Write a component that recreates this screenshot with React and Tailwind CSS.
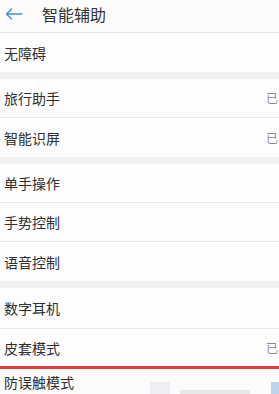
import React from "react";

const font = { fontFamily: '"Noto Sans CJK SC", "Noto Sans", sans-serif' };

function Row({ label, status, h = "h-[39px]", border = false }) {
  return (
    <div
      className={`relative flex items-center ${h} pl-[4px] bg-[#fdfdfd] ${
        border ? "border-b border-[#e9e9e9]" : ""
      }`}
    >
      <span className="text-[14px] leading-none text-[#2f2f2f]">{label}</span>
      {status && (
        <span className="absolute left-[266px] text-[12px] leading-none text-[#8a8a8a] whitespace-nowrap">
          已
        </span>
      )}
    </div>
  );
}

function Gap() {
  return <div className="h-[7px] bg-[#f1f1f1]" />;
}

export default function App() {
  return (
    <div
      className="w-[279px] h-[394px] overflow-hidden bg-[#fdfdfd] flex flex-col"
      style={font}
    >
      <div className="h-[33px] shrink-0 flex items-center border-b border-[#e6e6e6] bg-[#fcfcfc]">
        <svg
          width="18"
          height="12"
          viewBox="0 0 18 12"
          className="ml-[5px] mt-[-4px]"
          fill="none"
          stroke="#4a90d6"
          strokeWidth="1.4"
          strokeLinecap="round"
          strokeLinejoin="round"
        >
          <path d="M17 6H1.5M6.5 1L1.5 6l5 5" />
        </svg>
        <span className="ml-[19px] mt-[-4px] text-[16px] leading-none text-[#333]">
          智能辅助
        </span>
      </div>
      <Row label="无障碍" />
      <Gap />
      <Row label="旅行助手" status border />
      <Row label="智能识屏" status />
      <Gap />
      <Row label="单手操作" border />
      <Row label="手势控制" border />
      <Row label="语音控制" />
      <Gap />
      <Row label="数字耳机" h="h-[41px]" border />
      <Row label="皮套模式" status h="h-[37px]" />
      <div className="h-[3px] bg-[#e23b3b] shrink-0" />
      <div className="relative flex-1 flex items-center pl-[4px] bg-[#fbfbfb]">
        <span className="text-[14px] leading-none text-[#2f2f2f]">防误触模式</span>
        <div className="absolute left-[150px] bottom-0 w-[20px] h-[12px] bg-[#ebe8ee] opacity-70" />
        <div className="absolute left-[180px] bottom-0 w-[70px] h-[4px] bg-[#e2e2e2] opacity-80" />
        <div className="absolute right-0 bottom-0 w-[8px] h-[12px] bg-[#bcd3ea]" />
      </div>
    </div>
  );
}
